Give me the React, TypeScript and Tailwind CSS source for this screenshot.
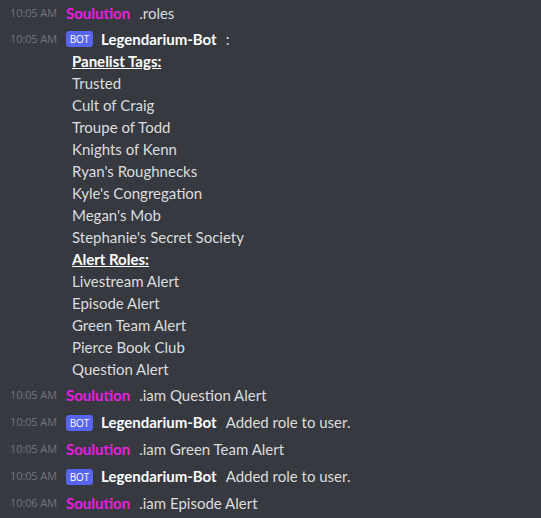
import React from "react";

const font = { fontFamily: "Lato, 'Open Sans', sans-serif" };

function Time({ t }: { t: string }) {
  return (
    <span className="w-[66px] shrink-0 whitespace-nowrap pl-[10px] text-[11px] tracking-[-0.1px] text-[#72767d]" style={{ fontFamily: "'Open Sans', sans-serif" }}>
      {t}
    </span>
  );
}

function Bot() {
  return (
    <span className="mr-[8px] inline-flex h-[16px] w-[27px] items-center justify-center rounded-[3px] bg-[#5865f2] text-[10px] font-medium leading-none text-white" style={{ fontFamily: "'Open Sans', sans-serif" }}>
      BOT
    </span>
  );
}

function Row({ t, bot, name, text }: { t: string; bot?: boolean; name: string; text: string }) {
  return (
    <div className="flex h-[27px] items-center">
      <Time t={t} />
      <div className="flex items-center whitespace-nowrap">
        {bot && <Bot />}
        <span className={`text-[15px] font-bold ${bot ? "text-white" : "text-[#e91ee0]"}`}>{name}</span>
        <span className="ml-[9px] text-[15px] text-[#dcddde]">{text}</span>
      </div>
    </div>
  );
}

const lines: { text: string; head?: boolean }[] = [
  { text: "Panelist Tags:", head: true },
  { text: "Trusted" },
  { text: "Cult of Craig" },
  { text: "Troupe of Todd" },
  { text: "Knights of Kenn" },
  { text: "Ryan's Roughnecks" },
  { text: "Kyle's Congregation" },
  { text: "Megan's Mob" },
  { text: "Stephanie's Secret Society" },
  { text: "Alert Roles:", head: true },
  { text: "Livestream Alert" },
  { text: "Episode Alert" },
  { text: "Green Team Alert" },
  { text: "Pierce Book Club" },
  { text: "Question Alert" },
];

export default function App() {
  return (
    <div className="h-[518px] w-[541px] overflow-hidden bg-[#36393f]" style={font}>
      <div className="flex h-[26px] items-center">
        <Time t="10:05 AM" />
        <span className="text-[15px] font-bold text-[#e91ee0]">Soulution</span>
        <span className="ml-[9px] text-[15px] text-[#dcddde]">.roles</span>
      </div>
      <div className="pt-[2px]">
        <div className="flex h-[22px] items-center">
          <Time t="10:05 AM" />
          <Bot />
          <span className="text-[15px] font-bold text-white">Legendarium-Bot</span>
          <span className="ml-[9px] text-[15px] text-[#dcddde]">:</span>
        </div>
        <div className="pl-[72px]">
          {lines.map((l) => (
            <div key={l.text} className={`h-[22px] text-[15px] leading-[22px] ${l.head ? "font-bold text-white underline" : "text-[#dcddde]"}`}>
              {l.text}
            </div>
          ))}
        </div>
      </div>
      <div className="mt-[2px]">
        <Row t="10:05 AM" name="Soulution" text=".iam Question Alert" />
        <Row t="10:05 AM" bot name="Legendarium-Bot" text="Added role to user." />
        <Row t="10:05 AM" name="Soulution" text=".iam Green Team Alert" />
        <Row t="10:05 AM" bot name="Legendarium-Bot" text="Added role to user." />
        <Row t="10:06 AM" name="Soulution" text=".iam Episode Alert" />
      </div>
    </div>
  );
}
